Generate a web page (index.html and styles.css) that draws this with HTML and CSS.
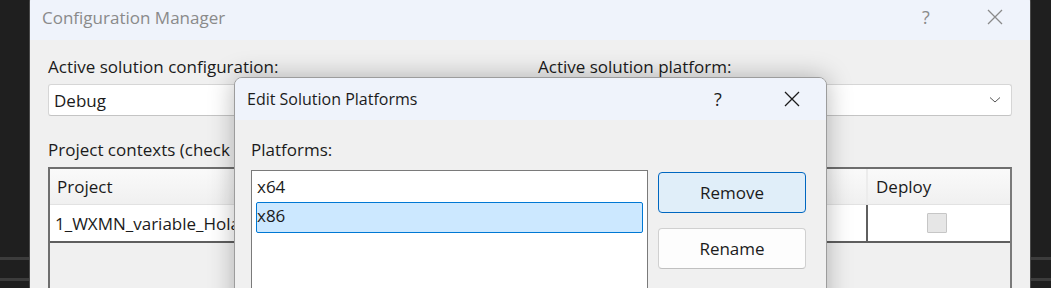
FILE: index.html
```html
<!DOCTYPE html>
<html lang="en">
<head>
    <meta charset="UTF-8">
    <title>Configuration Manager</title>
    <link rel="stylesheet" href="styles.css">
</head>
<body>

<div class="window">
    <div class="titlebar">
        <span class="title">Configuration Manager</span>
        <span class="help">?</span>
        <svg class="close" width="16" height="16" viewBox="0 0 16 16">
            <path d="M1 1 L15 15 M15 1 L1 15" stroke="#8a8a8a" stroke-width="1.3" fill="none"/>
        </svg>
    </div>

    <div class="content">
        <div class="fields">
            <div class="field">
                <label>Active solution configuration:</label>
                <div class="combo">Debug</div>
            </div>
            <div class="field">
                <label>Active solution platform:</label>
                <div class="combo">
                    <span></span>
                    <svg width="12" height="8" viewBox="0 0 12 8">
                        <path d="M1 1.5 L6 6 L11 1.5" stroke="#555" stroke-width="1" fill="none"/>
                    </svg>
                </div>
            </div>
        </div>

        <label>Project contexts (check the project configurations to build or deploy):</label>
        <div class="grid">
            <div class="grid-row head">
                <div class="cell project">Project</div>
                <div class="cell">Configuration</div>
                <div class="cell">Platform</div>
                <div class="cell build">Build</div>
                <div class="cell deploy">Deploy</div>
            </div>
            <div class="grid-row">
                <div class="cell project">1_WXMN_variable_HolaMundo</div>
                <div class="cell">Debug</div>
                <div class="cell">x64</div>
                <div class="cell build"></div>
                <div class="cell deploy"><span class="check"></span></div>
            </div>
        </div>
    </div>

    <!-- Edit Solution Platforms dialog on top -->
    <div class="dialog">
        <div class="titlebar dialog-bar">
            <span class="title">Edit Solution Platforms</span>
            <span class="help">?</span>
            <svg class="close" width="16" height="16" viewBox="0 0 16 16">
                <path d="M1 1 L15 15 M15 1 L1 15" stroke="#1b1b1b" stroke-width="1.3" fill="none"/>
            </svg>
        </div>
        <div class="dialog-body">
            <label>Platforms:</label>
            <div class="dialog-row">
                <div class="list">
                    <div class="item">x64</div>
                    <div class="item selected">x86</div>
                </div>
                <div class="buttons">
                    <button class="primary">Remove</button>
                    <button>Rename</button>
                </div>
            </div>
        </div>
    </div>
</div>

</body>
</html>
```

FILE: styles.css
```css
body {
    margin: 0;
    height: 288px;
    overflow: hidden;
    font-family: 'Open Sans', 'Noto Sans', sans-serif;
    font-size: 17px;
    color: #1b1b1b;
    background:
        linear-gradient(#1f1f1f 257px, #3c3c3c 257px, #3c3c3c 260px, #1f1f1f 260px, #1f1f1f 278px, #3c3c3c 278px, #3c3c3c 281px, #1f1f1f 281px);
}

.window {
    position: relative;
    width: 1000px;
    height: 300px;
    margin: -6px 0 0 30px;
    background: #f0f0f0;
    border-radius: 8px 8px 0 0;
    box-shadow: 0 0 0 1px #4a4a4a;
    overflow: hidden;
}

.titlebar {
    display: flex;
    align-items: center;
    height: 46px;
    padding: 0 0 0 12px;
    box-sizing: border-box;
    background: #eff3fb;
}

.title {
    flex: 1;
    font-size: 17px;
    color: #8a8a8a;
}

.help {
    width: 20px;
    font-size: 18px;
    color: #8a8a8a;
    text-align: center;
    margin-right: 51px;
}

.close {
    margin-right: 27px;
}

.content {
    padding: 15px 18px 0 18px;
}

label {
    display: block;
    height: 29px;
}

.fields {
    display: flex;
    gap: 20px;
    margin-bottom: 22px;
}

.field {
    flex: 1;
}

.field:last-child {
    flex: 0 0 474px;
}

.combo {
    display: flex;
    align-items: center;
    justify-content: space-between;
    height: 32px;
    padding: 0 10px 0 5px;
    box-sizing: border-box;
    background: #fff;
    border: 1px solid #d6d6d6;
    border-bottom-color: #c4c4c4;
    border-radius: 3px;
}

.grid {
    width: 964px;
    height: 200px;
    box-sizing: border-box;
    border-top: 2px solid #6e6e6e;
    border-left: 2px solid #6e6e6e;
    border-right: 2px solid #7a7a7a;
}

.grid-row {
    display: flex;
    background: #fff;
}

.grid-row.head {
    height: 35px;
    background: linear-gradient(#fafafa, #f0f0f0);
    border-bottom: 1px solid #e2e2e2;
}

.grid-row:not(.head) {
    height: 36px;
    border-bottom: 2px solid #5f5f5f;
}

.cell {
    flex: 1;
    display: flex;
    align-items: center;
    box-sizing: border-box;
    padding-left: 5px;
    white-space: nowrap;
    overflow: hidden;
}

.head .cell {
    padding-left: 7px;
}

.cell.project {
    flex: 0 0 300px;
}

.cell.build {
    flex: 0 0 120px;
}

.cell.deploy {
    flex: 0 0 144px;
    border-left: 2px solid #5f5f5f;
}

.head .cell.deploy {
    border-left: 2px solid #ececec;
    padding-left: 8px;
}

.grid-row:not(.head) .cell.deploy {
    justify-content: center;
    padding-left: 0;
}

.check {
    width: 18px;
    height: 18px;
    margin-right: 4px;
    background: #e6e6e6;
    border: 1px solid #c6c6c6;
    border-radius: 1px;
}

.dialog {
    position: absolute;
    left: 204px;
    top: 83px;
    width: 591px;
    height: 260px;
    background: #f0f0f0;
    border: 1px solid #9c9c9c;
    border-radius: 8px 8px 0 0;
    box-shadow: 0 0 26px rgba(0, 0, 0, 0.28);
    overflow: hidden;
}

.dialog-bar {
    height: 42px;
}

.dialog-bar .title {
    color: #1b1b1b;
    font-size: 16px;
}

.dialog-bar .help {
    color: #1b1b1b;
    margin-right: 56px;
}

.dialog-bar .close {
    margin-right: 26px;
}

.dialog-body {
    padding: 18px 17px 0 16px;
}

.dialog-body label {
    height: 32px;
}

.dialog-row {
    display: flex;
    gap: 10px;
}

.list {
    width: 397px;
    height: 140px;
    box-sizing: border-box;
    padding: 1px 4px;
    background: #fff;
    border: 1px solid #7a7a7a;
}

.item {
    height: 30px;
    line-height: 30px;
    padding-left: 1px;
}

.item.selected {
    height: 29px;
    line-height: 26px;
    padding-left: 0;
    background: #cce8ff;
    border: 1px solid #0078d4;
    border-radius: 2px;
}

.buttons {
    display: flex;
    flex-direction: column;
    gap: 15px;
    padding-top: 2px;
}

button {
    width: 148px;
    height: 41px;
    font-family: inherit;
    font-size: 17px;
    color: #1b1b1b;
    background: #fdfdfd;
    border: 1px solid #d0d0d0;
    border-bottom-color: #c0c0c0;
    border-radius: 4px;
}

button.primary {
    background: #e0eef9;
    border: 1px solid #0067c0;
}
```
